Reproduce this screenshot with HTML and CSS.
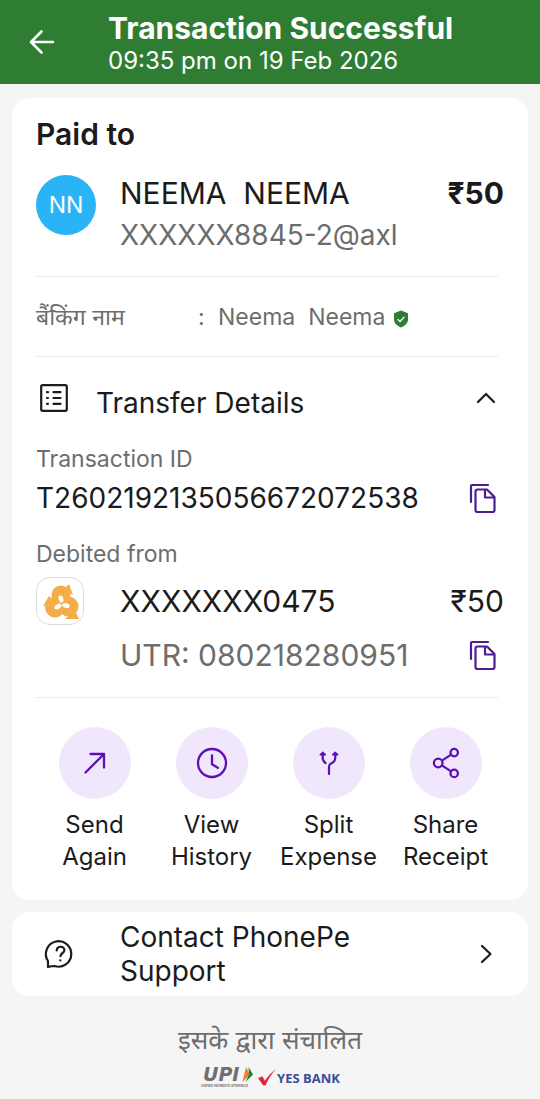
FILE: index.html
```html
<!DOCTYPE html>
<html lang="en">
<head>
<meta charset="utf-8">
<meta name="viewport" content="width=device-width, initial-scale=1">
<title>Transaction Successful</title>
<link rel="stylesheet" href="styles.css">
</head>
<body>
<header class="topbar">
  <button class="icon-button back" type="button" aria-label="Back">
    <svg width="28" height="28" viewBox="0 0 28 28" fill="none" stroke="currentColor" stroke-width="2.6" stroke-linecap="round" stroke-linejoin="round"><path d="M25 14H3.500M13.500 3.500 3 14l10.500 10.500"/></svg>
  </button>
  <div class="heading">
    <h1 class="title">Transaction Successful</h1>
    <p class="date">09:35 pm on 19 Feb 2026</p>
  </div>
</header>
<main class="content">
  <section class="card receipt">
    <h2 class="section-title">Paid to</h2>
    <div class="payee">
      <div class="avatar">NN</div>
      <div class="payee-text">
        <p class="name">NEEMA&nbsp; NEEMA</p>
        <p class="handle">XXXXXX8845-2@axl</p>
      </div>
      <p class="amount strong">₹50</p>
    </div>
    <hr class="divider">
    <dl class="banking">
      <dt class="banking-label" lang="hi">बैंकिंग नाम</dt>
      <dd class="banking-value">
        <span class="colon">:</span>
        <span>Neema&nbsp; Neema</span>
        <svg class="shield" width="16" height="18" viewBox="0 0 16 18"><path d="M8 .5 15 3.200v6.300c0 3.500-2.600 6.200-7 8-4.400-1.800-7-4.500-7-8V3.200z" fill="#2e7d32"/><path d="m4.600 9.200 2.400 2.300 4.300-4.600" fill="none" stroke="#fff" stroke-width="1.300"/></svg>
      </dd>
    </dl>
    <hr class="divider">
    <button class="details-toggle" type="button" aria-expanded="true">
      <svg class="details-icon" width="36" height="30" viewBox="0 0 36 30" fill="none" stroke="currentColor" stroke-width="2.200" stroke-linecap="round"><rect x="5.200" y="2.200" width="25.600" height="25.600" rx="1.500"/><path d="M11 9.200h1M17.500 9.200h7M11 15h1M17.500 15h7M11 20.800h1M17.500 20.800h7"/></svg>
      <span class="details-label">Transfer Details</span>
      <svg class="chevron" width="36" height="30" viewBox="0 0 36 30" fill="none" stroke="currentColor" stroke-width="2.200" stroke-linecap="round" stroke-linejoin="round"><path d="m10 19 8-8 8 8"/></svg>
    </button>
    <p class="label transaction-label">Transaction ID</p>
    <div class="line">
      <p class="transaction-id">T2602192135056672072538</p>
      <button class="icon-button copy" type="button" aria-label="Copy transaction ID">
        <svg width="28" height="32" viewBox="0 0 28 32" fill="none" stroke="currentColor" stroke-width="2.200" stroke-linecap="round" stroke-linejoin="round"><path d="M2 20V4Q2 3 3 3H19"/><path d="M8.500 7.500H18l7.500 7.500v13q0 2-2 2h-15q-2 0-2-2v-18.500q0-2 2-2zM16 7.500V15.500h9"/></svg>
      </button>
    </div>
    <p class="label debit-label">Debited from</p>
    <div class="account">
      <div class="bank-logo">
        <svg width="46" height="46" viewBox="0 0 46 46"><g fill="#f4ae49"><circle cx="24" cy="17" r="9.500"/><circle cx="18" cy="29.500" r="10"/><circle cx="31.500" cy="28.500" r="10"/><path d="m32 6 4 11-10-5zM6 28l6-10 9 8zM42 41H28l10-9zM18 33h16v4l-8-1z"/></g><g fill="#fff"><ellipse cx="24" cy="21" rx="2.300" ry="3.600" transform="rotate(-15 24 21)"/><ellipse cx="29" cy="27.500" rx="3.800" ry="2.300" transform="rotate(15 29 27.500)"/><ellipse cx="21" cy="28.500" rx="3.800" ry="2.300" transform="rotate(-30 21 28.500)"/></g></svg>
      </div>
      <p class="account-number">XXXXXXX0475</p>
      <p class="amount">₹50</p>
    </div>
    <div class="line utr">
      <p class="utr-text">UTR: 080218280951</p>
      <button class="icon-button copy" type="button" aria-label="Copy UTR">
        <svg width="28" height="32" viewBox="0 0 28 32" fill="none" stroke="currentColor" stroke-width="2.200" stroke-linecap="round" stroke-linejoin="round"><path d="M2 20V4Q2 3 3 3H19"/><path d="M8.500 7.500H18l7.500 7.500v13q0 2-2 2h-15q-2 0-2-2v-18.500q0-2 2-2zM16 7.500V15.500h9"/></svg>
      </button>
    </div>
    <hr class="divider">
    <div class="actions">
      <button class="action" type="button">
        <span class="action-icon"><svg width="36" height="36" viewBox="0 0 36 36" fill="none" stroke="currentColor" stroke-width="2.300" stroke-linecap="round" stroke-linejoin="round"><path d="M8.500 27.500 27 9M13.500 9H27v13.500"/></svg></span>
        <span>Send<br>Again</span>
      </button>
      <button class="action" type="button">
        <span class="action-icon"><svg width="36" height="36" viewBox="0 0 36 36" fill="none" stroke="currentColor" stroke-width="2.300" stroke-linecap="round" stroke-linejoin="round"><circle cx="18" cy="18" r="14"/><path d="M18 10.500v8.700l5.800 3.600"/></svg></span>
        <span>View<br>History</span>
      </button>
      <button class="action" type="button">
        <span class="action-icon"><svg width="36" height="36" viewBox="0 0 36 36" fill="none" stroke="currentColor" stroke-width="2.200" stroke-linecap="round" stroke-linejoin="round"><path d="M18 29v-7.500q0-2 2.500-3.200 3.800-1.800 3.800-6V9M11.700 9v4q0 3 2.800 5"/><path d="m9.200 9.800 2.600-2.600 2.600 2.600zM21.600 9.800l2.600-2.600 2.600 2.600z" fill="currentColor" stroke-width="1.400"/></svg></span>
        <span>Split<br>Expense</span>
      </button>
      <button class="action" type="button">
        <span class="action-icon"><svg width="36" height="36" viewBox="0 0 36 36" fill="none" stroke="currentColor" stroke-width="2.300"><circle cx="10.200" cy="18" r="4.300"/><circle cx="26.200" cy="7.600" r="3.700"/><circle cx="26.200" cy="28.400" r="3.700"/><path d="m13.900 15.600 9.200-6M13.900 20.400l9.200 6"/></svg></span>
        <span>Share<br>Receipt</span>
      </button>
    </div>
  </section>
  <a class="card support" href="#support">
    <svg class="support-icon" width="48" height="32" viewBox="0 0 48 32" fill="none" stroke="currentColor" stroke-width="2.200" stroke-linecap="round" stroke-linejoin="round"><path d="M12 29v-6a12.700 12.700 0 1 1 6.500 5q-3.200.2-6.500 1z"/><path d="M20.700 12.500c0-5.200 8.200-4.800 7.700 0-.3 2.700-3.800 2.400-4 5.700"/><path d="M24.300 22.300v.1"/></svg>
    <span class="support-label">Contact PhonePe Support</span>
    <svg class="chevron" width="36" height="30" viewBox="0 0 36 30" fill="none" stroke="currentColor" stroke-width="2.200" stroke-linecap="round" stroke-linejoin="round"><path d="m14 7 8.500 8-8.500 8"/></svg>
  </a>
</main>
<footer class="powered">
  <p class="powered-text" lang="hi">इसके द्वारा संचालित</p>
  <div class="partners">
    <svg class="upi" width="55" height="23" viewBox="0 0 55 23" role="img" aria-label="UPI, Unified Payments Interface">
      <text x="3" y="15" class="upi-name">UPI</text>
      <path d="m46 1 4 7.500-7.500 7.500z" fill="#f47b27"/><path d="m48.500 1 4.500 7.500L45.500 16l3.500-7.500z" fill="#128345"/>
      <text x="1" y="21" class="upi-caption">UNIFIED PAYMENTS INTERFACE</text>
    </svg>
    <svg class="yes-tick" width="20" height="20" viewBox="0 0 20 20" aria-hidden="true"><path d="m1 10 4.500-1.800 2.200 4.600Q12 6 19 1 12.500 8 8.500 17.500L6 17.300z" fill="#db2542"/></svg>
    <span class="yes-name">YES BANK</span>
  </div>
</footer>
</body>
</html>
```

FILE: styles.css
```css
* { box-sizing: border-box; }
body {
  margin: 0;
  background: #f5f5f5;
  color: #1b1b1b;
  font-family: Inter, "Noto Sans", sans-serif;
  font-size: 24px;
  line-height: 32px;
}
h1, h2, p, dl, dd { margin: 0; }
svg { display: block; flex: none; }
button { font: inherit; color: inherit; background: none; border: 0; padding: 0; cursor: pointer; }
.topbar {
  display: flex;
  align-items: flex-start;
  gap: 52px;
  padding: 12px 28px 6px;
  background: #2e7d32;
  color: #fff;
}
.back { margin-top: 16px; }
.title { font-size: 30px; line-height: 32px; font-weight: 700; }
.date { line-height: 34px; }
.content { display: grid; gap: 12px; padding: 14px 12px 0; }
.card { background: #fff; border-radius: 18px; }
.receipt { padding: 16px 24px 27px; }
.section-title { font-size: 30px; line-height: 40px; font-weight: 600; }
.payee { display: flex; gap: 24px; margin-top: 18px; font-size: 28px; line-height: 42px; }
.avatar {
  flex: none;
  width: 60px;
  height: 60px;
  margin-top: 3px;
  border-radius: 50%;
  background: #2ab4f6;
  color: #fff;
  font-size: 23px;
  line-height: 60px;
  text-align: center;
}
.payee-text { flex: 1; }
.name { font-size: 30px; }
.handle { color: #6d6d6d; }
.amount { margin-left: auto; font-size: 30px; }
.strong { font-weight: 700; }
.divider { height: 1px; margin: 20px 6px 0 0; border: 0; background: #ebebeb; }
.banking { display: flex; padding: 24px 0 23px; color: #6d6d6d; }
.banking-label { width: 162px; font-size: 23px; }
.banking-value { display: flex; align-items: center; font-size: 23px; }
.colon { width: 20px; }
.shield { margin: 4px 0 0 8px; }
.banking + .divider { margin-top: 0; }
.details-toggle {
  display: flex;
  width: 100%;
  margin-top: 26px;
  font-size: 28px;
  line-height: 40px;
  text-align: left;
}
.details-label { flex: 1; margin-left: 24px; }
.label { color: #6d6d6d; font-size: 23px; }
.transaction-label { margin-top: 20px; }
.line { display: flex; align-items: center; justify-content: space-between; padding-right: 7px; font-size: 28px; line-height: 40px; margin-top: 3px; }
.copy { color: #4c1d95; }
.debit-label { margin-top: 20px; }
.account { display: flex; align-items: center; gap: 36px; margin-top: 7px; font-size: 30px; line-height: 40px; }
.bank-logo { display: grid; place-items: center; width: 48px; height: 48px; border: 1px solid #dcdcdc; border-radius: 14px; }
.utr { margin-top: 10px; padding-left: 84px; font-size: 30px; }
.utr-text { color: #6d6d6d; }
.utr + .divider { margin-top: 22px; }
.actions { display: grid; grid-template-columns: repeat(4, 1fr); margin-top: 29px; }
.action { display: grid; justify-items: center; gap: 10px; }
.action-icon { display: grid; place-items: center; width: 72px; height: 72px; border-radius: 50%; background: #f1e7fc; color: #5b0fb5; }
.support { display: flex; align-items: center; padding: 8px 24px; color: inherit; text-decoration: none; font-size: 28px; line-height: 34px; }
.support-label { flex: 1; margin: 0 72px 0 36px; }
.powered { display: grid; justify-items: center; gap: 10px; padding: 28px 0 10px; }
.powered-text { color: #6d6d6d; font-size: 26px; }
.partners { display: flex; align-items: center; }
.upi { overflow: visible; }
.upi-name { font: italic 700 19px "DejaVu Sans", sans-serif; fill: #6f6f70; }
.upi-caption { font: italic 700 3px "Liberation Sans", sans-serif; fill: #6f6f70; }
.yes-tick { margin-left: 2px; }
.yes-name { color: #354c9b; font: 700 13px/20px "Open Sans", sans-serif; }
```
